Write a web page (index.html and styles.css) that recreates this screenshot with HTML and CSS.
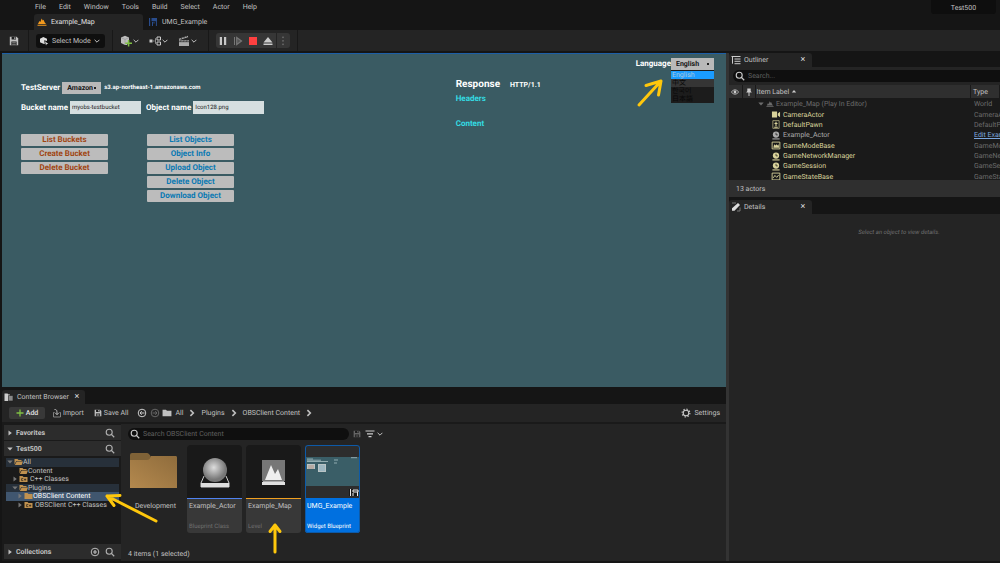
FILE: index.html
```
<!DOCTYPE html>
<html lang="en">
<head>
<meta charset="utf-8">
<title>Test500</title>
<link rel="stylesheet" href="styles.css">
</head>
<body>
<svg class="defs" aria-hidden="true">
  <symbol id="search" viewBox="0 0 10 10"><circle cx="4.2" cy="4.2" r="3" fill="none" stroke="currentColor" stroke-width="1.1"/><path d="M6.4 6.4 9.2 9.2" stroke="currentColor" stroke-width="1.3"/></symbol>
  <symbol id="down" viewBox="0 0 6 6"><path d="M.6 1.8 3 4.2 5.4 1.8" fill="none" stroke="currentColor"/></symbol>
  <symbol id="right" viewBox="0 0 6 6"><path d="M1.8.8 4 3 1.8 5.2" fill="none" stroke="currentColor" stroke-width="1.2"/></symbol>
  <symbol id="closed" viewBox="0 0 6 6"><path d="M1.5.5 4.8 3 1.5 5.5Z" fill="currentColor"/></symbol>
  <symbol id="open" viewBox="0 0 6 6"><path d="M.3 1.5H5.7L3 4.6Z" fill="currentColor"/></symbol>
  <symbol id="folder" viewBox="0 0 9 8"><path d="M.5 1H3.5L4.5 2H8.5V7H.5Z" fill="currentColor"/></symbol>
  <symbol id="folder-open" viewBox="0 0 9 8"><path d="M.5 6.5V1H3.5L4.5 2H7.5V3H2.2Z" fill="currentColor"/><path d="M2.6 3.6H9L7.6 7H.9Z" fill="currentColor"/></symbol>
  <symbol id="folder-code" viewBox="0 0 9 8"><path d="M.5 1H3.5L4.5 2H8.5V7H.5Z" fill="currentColor"/><path d="M4.3 3.6H2.6V5.6H4.3M5 4.6H7.2M6.1 3.5V5.7" fill="none" stroke="#2a2117" stroke-width=".7"/></symbol>
  <symbol id="peaks" viewBox="0 0 10 8"><path d="M1 6 2.4 3 3.4 4 4.6.5 5.8 2.5 6.6 1.8 7.6 4.3 9 6ZM.5 6.8H9.5V7.8H.5Z" fill="currentColor"/></symbol>
  <symbol id="disk" viewBox="0 0 10 10"><path d="M.8.8H7.6L9.2 2.4V9.2H.8Z" fill="currentColor"/><path d="M2.6.8H7V3.6H2.6ZM2.4 5.6H7.6V9.2H2.4Z" fill="#1d1d1d"/><path d="M5.3 1.2H6.4V3H5.3ZM3.2 6.5H6.8V7.1H3.2ZM3.2 7.8H6.8V8.4H3.2Z" fill="currentColor"/></symbol>
  <symbol id="ball" viewBox="0 0 10 10"><circle cx="5" cy="4" r="3.5" fill="currentColor"/><path d="M5 2V4.3H7" fill="none" stroke="#1a1a1a" stroke-width=".8"/><path d="M1 8.2H9V9.4H1Z" fill="currentColor"/></symbol>
</svg>

<nav class="menubar">
  <button>File</button><button>Edit</button><button>Window</button><button>Tools</button><button>Build</button><button>Select</button><button>Actor</button><button>Help</button>
  <span class="project">Test500</span>
</nav>
<div class="doctabs">
  <button class="doctab active"><svg class="i10 orange"><use href="#peaks"/></svg>Example_Map</button>
  <button class="doctab"><svg class="i10" viewBox="0 0 10 10"><path d="M1 1H2.2V9H1ZM3.5 1H9V4.2H3.5Z" fill="#294c8c"/><path d="M4.5 5V9M6 5V6.5M8.4 4V9" stroke="#294c8c"/></svg>UMG_Example</button>
</div>
<div class="toolbar">
  <button class="tool save" aria-label="Save"><svg class="i10"><use href="#disk"/></svg></button>
  <div class="group">
    <button class="mode"><svg class="i10" viewBox="0 0 10 10"><path d="M4.3 1 8 2.7V5L5.2 4.3 5.8 8 4.3 7.8 1 6.2V2.7Z" fill="#ddd"/><path d="M6 5.2 9.3 8 7.7 8.1 7 9.5Z" fill="#ddd"/></svg>Select Mode<svg class="i6"><use href="#down"/></svg></button>
  </div>
  <div class="group tools">
    <button class="tool" aria-label="Add actor"><svg class="i12" viewBox="0 0 12 12"><path d="M5 .8 9 2.6V6L7 10H5L1 8V2.6Z" fill="#bdbdbd"/><path d="M1 2.6 5 4.4 9 2.6M5 4.4V10" stroke="#888" fill="none" stroke-width=".5"/><path d="M8.6 5V11.6M5.3 8.3H12" stroke="#7fc043" stroke-width="1.5"/></svg><svg class="i6"><use href="#down"/></svg></button>
    <button class="tool" aria-label="Blueprints"><svg class="i12" viewBox="0 0 12 12"><path d="M.5 4.5H3.5V7.5H.5Z" fill="#ccc"/><path d="M4 6H5.5M6.5 3.2V8.8" fill="none" stroke="#aaa" stroke-width=".8"/><path d="M8 2H11.5V5H8ZM8 7H11.5V10H8Z" fill="none" stroke="#ccc"/></svg><svg class="i6"><use href="#down"/></svg></button>
    <button class="tool" aria-label="Cinematics"><svg class="i12" viewBox="0 0 12 12"><path d="M1 5.2H11V11H1ZM.8 3.7 9.8.7 10.2 2.2 1.3 4.9Z" fill="#aaa"/><path d="M3 3 4 4.2M5.7 2 6.7 3.3M8.2 1.2 9.2 2.5M1 6.7H11M3 5.3 2.4 6.6M6 5.3 5.4 6.6M9 5.3 8.4 6.6" stroke="#242424" stroke-width=".7"/></svg><svg class="i6"><use href="#down"/></svg></button>
  </div>
  <div class="group">
    <div class="playbar">
      <button aria-label="Pause"><svg class="i10" viewBox="0 0 10 10"><path d="M1.8 1H4V9H1.8ZM6 1H8.2V9H6Z" fill="#c8c8c8"/></svg></button>
      <button aria-label="Step"><svg class="i10" viewBox="0 0 10 10"><path d="M1.5 1V9" stroke="#777"/><path d="M3.7 1.5 8.5 5 3.7 8.5Z" fill="#555" stroke="#777" stroke-width="1.2"/></svg></button>
      <button aria-label="Stop"><svg class="i10" viewBox="0 0 10 10"><path d="M1 1H9V9H1Z" fill="#fd4040"/></svg></button>
      <button aria-label="Eject"><svg class="i10" viewBox="0 0 10 10"><path d="M5 1 9.5 6.4H.5ZM.5 7.4H9.5V9H.5Z" fill="#ccc"/></svg></button>
      <button class="more" aria-label="More"><svg class="i10" viewBox="0 0 10 10"><path d="M5 .6V9.8" stroke="#888" stroke-dasharray="1.5 2"/></svg></button>
    </div>
  </div>
  <div class="group"></div>
</div>

<main class="workspace">
  <div class="left">
    <section class="viewport">
      <div class="client">
        <div class="field"><label for="server">TestServer</label><span class="pick"><select id="server"><option>Amazon</option></select><i></i></span><span class="url">s3.ap-northeast-1.amazonaws.com</span></div>
        <div class="field names"><label for="bucket">Bucket name</label><input id="bucket" value="myobs-testbucket"><label class="second" for="object">Object name</label><input id="object" value="Icon128.png"></div>
        <div class="actions">
          <div class="stack buckets"><button>List Buckets</button><button>Create Bucket</button><button>Delete Bucket</button></div>
          <div class="stack objects"><button>List Objects</button><button>Object Info</button><button>Upload Object</button><button>Delete Object</button><button>Download Object</button></div>
        </div>
      </div>
      <div class="response">
        <h2>Response <span>HTTP/1.1</span></h2>
        <h3>Headers</h3>
        <h3>Content</h3>
      </div>
      <div class="language">
        <label for="lang">Language</label><span class="pick"><select id="lang"><option>English</option></select><i></i>
        <ul class="options"><li class="on">English</li><li class="hover">中文</li><li>한국어</li><li>日本語</li></ul></span>
        <svg class="arrow a-lang" viewBox="0 0 28 30"><path d="M3 27 25 3M10 7.5 25 3 22.5 17" /></svg>
      </div>
    </section>

    <section class="browser">
      <div class="tabs"><div class="tab cb"><svg class="i10" viewBox="0 0 10 10"><path d="M.5 1.5H3.5L4.5 2.5H6V9H.5Z" fill="#ccc"/><path d="M4.5 3.5H9V9H4.5Z" fill="#888" stroke="#1d1d1d" stroke-width=".6"/></svg>Content Browser<button aria-label="Close">×</button></div></div>
      <div class="cb-bar">
        <button class="add"><svg class="i8" viewBox="0 0 8 8"><path d="M4 .5V7.5M.5 4H7.5" stroke="#7fc043" stroke-width="1.3"/></svg>Add</button>
        <button class="import"><svg class="i10" viewBox="0 0 10 10"><path d="M2.5 4.5H1.5V9H8.5V4.5H7.5" fill="none" stroke="#999" stroke-width=".8"/><path d="M2.5 1.5C5 1.5 5 2.5 5 6.5M3.2 4.8 5 6.7 6.8 4.8" fill="none" stroke="#bbb"/></svg>Import</button>
        <button class="saveall"><svg class="i8"><use href="#disk"/></svg>Save All</button>
        <button class="back" aria-label="Back"><svg class="i10" viewBox="0 0 10 10"><circle cx="5" cy="5" r="3.8" fill="none" stroke="#ccc"/><path d="M7.5 5H3M4.7 3.2 3 5 4.7 6.8" fill="none" stroke="#ccc"/></svg></button>
        <button class="fwd" aria-label="Forward"><svg class="i10" viewBox="0 0 10 10"><circle cx="5" cy="5" r="3.8" fill="none" stroke="#666"/><path d="M2.5 5H7M5.3 3.2 7 5 5.3 6.8" fill="none" stroke="#666"/></svg></button>
        <nav class="crumbs"><svg class="i10"><use href="#folder"/></svg><a href="#">All</a><svg class="i8"><use href="#right"/></svg><a href="#">Plugins</a><svg class="i8"><use href="#right"/></svg><a href="#">OBSClient Content</a><svg class="i8"><use href="#right"/></svg></nav>
        <button class="settings"><svg class="i10" viewBox="0 0 10 10"><circle cx="5" cy="5" r="2.8" fill="none" stroke="#ccc" stroke-width="1.1"/><circle cx="5" cy="5" r="3.9" fill="none" stroke="#ccc" stroke-width="1.1" stroke-dasharray="1.3 1.76"/></svg>Settings</button>
      </div>
      <div class="cb-body">
        <aside class="sources">
          <div class="head"><svg class="i6"><use href="#closed"/></svg>Favorites<button aria-label="Search favorites"><svg class="i10"><use href="#search"/></svg></button></div>
          <div class="head"><svg class="i6"><use href="#open"/></svg>Test500<button aria-label="Search sources"><svg class="i10"><use href="#search"/></svg></button></div>
          <div class="treebox">
            <ul class="tree">
              <li class="d0 tint"><svg class="i6"><use href="#open"/></svg><svg class="f"><use href="#folder-open"/></svg>All</li>
              <li class="d1"><span class="i6"></span><svg class="f"><use href="#folder-open"/></svg>Content</li>
              <li class="d1"><svg class="i6"><use href="#closed"/></svg><svg class="f"><use href="#folder-code"/></svg><span class="sp">C++ Classes</span></li>
              <li class="d1 tint"><svg class="i6"><use href="#open"/></svg><svg class="f"><use href="#folder-open"/></svg>Plugins</li>
              <li class="d2 sel"><svg class="i6"><use href="#closed"/></svg><svg class="f"><use href="#folder"/></svg>OBSClient Content</li>
              <li class="d2"><svg class="i6"><use href="#closed"/></svg><svg class="f"><use href="#folder-code"/></svg><span class="sp">OBSClient C++ Classes</span></li>
            </ul>
            <svg class="arrow a-tree" viewBox="0 0 56 32"><path d="M53 29 4 4M17 3.5 4 4 11 13.5"/></svg>
          </div>
          <div class="head"><svg class="i6"><use href="#closed"/></svg>Collections<button aria-label="Add collection"><svg class="i10" viewBox="0 0 10 10"><circle cx="5" cy="5" r="3.8" fill="none" stroke="#bbb"/><path d="M5 3V7M3 5H7" stroke="#bbb" stroke-width="1.2"/></svg></button><button aria-label="Search collections"><svg class="i10"><use href="#search"/></svg></button></div>
        </aside>
        <div class="assets">
          <div class="filter">
            <label class="searchbox"><svg class="i10"><use href="#search"/></svg><input aria-label="Search assets" placeholder="Search OBSClient Content"></label>
            <svg class="i8 dim"><use href="#disk"/></svg>
            <button aria-label="Filters"><svg class="i10" viewBox="0 0 10 10"><path d="M.5 2H9.5M2 4.8H8M3.5 7.6H6.5" stroke="#ccc" stroke-width="1.2"/></svg><svg class="i6"><use href="#down"/></svg></button>
          </div>
          <div class="tiles">
            <div class="tile dir"><div class="thumb"><svg viewBox="0 0 55 53"><defs><linearGradient id="fg" x1="1" y1="0" x2="0" y2="1"><stop offset="0" stop-color="#8f6c3c"/><stop offset="1" stop-color="#b4894e"/></linearGradient></defs><path d="M2 10Q2 8 4 8H19Q21 8 23 12H48Q49 12 49 13V43H2Z" fill="#7f6237"/><path d="M2 15H19Q22 15 23 11H48Q49 11 49 13V43H2Z" fill="url(#fg)"/></svg></div><div class="cap"><b>Development</b></div></div>
            <div class="tile"><div class="thumb"><svg viewBox="0 0 55 53"><defs><radialGradient id="sg" cx=".45" cy=".4"><stop offset="0" stop-color="#ddd"/><stop offset="1" stop-color="#777"/></radialGradient></defs><path d="M17 31 14 38V42H42V38L39 31" fill="none" stroke="#d0d0d0"/><path d="M14 38H42V42H14Z" fill="#ddd"/><circle cx="28" cy="25" r="12" fill="url(#sg)"/></svg></div><div class="cap blue"><b>Example_Actor</b><small>Blueprint Class</small></div></div>
            <div class="tile"><div class="thumb"><svg viewBox="0 0 55 53"><path d="M16 15H39V36H16Z" fill="#777"/><path d="M16 40 17 36H38L39 40Z" fill="#aaa"/><path d="M19 35 25 20 29 29 32 24 36 35Z" fill="#eee"/><path d="M16 37H39V40H16Z" fill="#e0e0e0"/></svg></div><div class="cap gold"><b>Example_Map</b><small>Level</small></div><svg class="arrow a-map" viewBox="0 0 16 34"><path d="M8 31V4M3 10.5 8 4 13 10.5"/></svg></div>
            <div class="tile chosen"><div class="thumb"><svg viewBox="0 0 55 53"><path d="M0 0H55V53H0Z" fill="#2d2d2d"/><path d="M1 12H54V41H1Z" fill="#3a5e67"/><path d="M2 14H8M2 16.5H23M2 15.2H16M29 15H33M29 18H32M46 12.7H52" stroke="#cfe0e2" stroke-width=".6"/><path d="M2 19H10V24H2ZM13 19H21V27H13Z" fill="#b9c4c5"/><path d="M3 21H9M3 23H9" stroke="#b07258" stroke-width=".6"/><path d="M14 21H20M14 23H20M14 25H20" stroke="#5a9ab8" stroke-width=".6"/><path d="M44 44H53V51H44Z" fill="#181818"/><path d="M45.5 44V51M48 45H53V47H48ZM48 48V51M52.5 47V51" stroke="#eee" fill="none"/></svg></div><div class="cap"><b>UMG_Example</b><small>Widget Blueprint</small></div></div>
          </div>
          <p class="count">4 items (1 selected)</p>
        </div>
      </div>
    </section>
  </div>

  <div class="right">
    <section class="outliner">
      <div class="tabs"><div class="tab"><svg class="i10" viewBox="0 0 10 10"><path d="M.5 1.5H9.5M3.5 4H9.5M3.5 6.3H9.5M3.5 8.7H9.5M1.5 1.5V8.7" stroke="#ccc"/></svg>Outliner<button aria-label="Close">×</button></div></div>
      <div class="outsearch"><label class="searchbox"><svg class="i10"><use href="#search"/></svg><input aria-label="Search actors" placeholder="Search..."></label></div>
      <div class="tablebox">
        <table>
          <thead><tr><th class="ic"><svg class="i8" viewBox="0 0 8 8"><path d="M.3 4Q4-.5 7.7 4 4 8.5.3 4Z" fill="none" stroke="#bbb" stroke-width=".9"/><circle cx="4" cy="4" r="1.4" fill="#ccc"/></svg></th><th class="ic"><svg class="i8" viewBox="0 0 8 8"><path d="M2.3.5H5.7V3L6.8 4.6H1.2L2.3 3ZM3.5 4.5H4.5V8H3.5Z" fill="#ccc"/></svg></th><th class="item">Item Label <svg class="up" viewBox="0 0 6 6"><path d="M.8 4.5 3 2 5.2 4.5Z" fill="#ccc"/></svg></th><th class="type">Type</th></tr></thead>
        </table>
        <div class="rows">
        <table class="list">
          <tbody>
            <tr class="world"><td class="item"><div><svg class="i6"><use href="#open"/></svg><svg class="i8"><use href="#peaks"/></svg>Example_Map (Play In Editor)</div></td><td class="type">World</td></tr>
            <tr><td class="item"><div><svg class="g" viewBox="0 0 10 10"><path d="M.5 1.8H6.2V8.2H.5ZM7 4 9.5 2V8L7 6Z" fill="currentColor"/></svg>CameraActor</div></td><td class="type">CameraActor</td></tr>
            <tr><td class="item"><div><svg class="g" viewBox="0 0 10 10"><path d="M1.5.7H8.5V9.3H1.5Z" fill="none" stroke="currentColor" stroke-width=".7"/><path d="M5 2V7M3.3 3.8H6.7M3 8H7" stroke="currentColor" stroke-width="1.2"/></svg>DefaultPawn</div></td><td class="type">DefaultPawn</td></tr>
            <tr class="plain"><td class="item"><div><svg class="g"><use href="#ball"/></svg>Example_Actor</div></td><td class="type"><a href="#">Edit Example_Actor</a></td></tr>
            <tr><td class="item"><div><svg class="g" viewBox="0 0 10 10"><path d="M.7 1.2H9.3V8.8H.7Z" fill="none" stroke="currentColor"/><path d="M2 7.5 3 3.5 4.5 5 5.5 3.5 7 5 7.7 3.2 8.5 7.5Z" fill="currentColor"/></svg>GameModeBase</div></td><td class="type">GameModeBase</td></tr>
            <tr><td class="item"><div><svg class="g"><use href="#ball"/></svg>GameNetworkManager</div></td><td class="type">GameNetworkManager</td></tr>
            <tr><td class="item"><div><svg class="g"><use href="#ball"/></svg>GameSession</div></td><td class="type">GameSession</td></tr>
            <tr><td class="item"><div><svg class="g" viewBox="0 0 10 10"><path d="M.7 1.2H9.3V8.8H.7Z" fill="none" stroke="currentColor"/><path d="M2 6.5 3.8 3.8 5.8 6 8 3.3" fill="none" stroke="currentColor"/></svg>GameStateBase</div></td><td class="type">GameStateBase</td></tr>
          </tbody>
        </table>
        </div>
      </div>
      <p class="actors">13 actors</p>
    </section>
    <section class="details">
      <div class="tabs"><div class="tab"><svg class="i10" viewBox="0 0 10 10"><path d="M1 8.8V6.2L7 1 9 3 3.5 8.8Z" fill="#ddd"/><path d="M1 1H5M9 5.5V9H6" fill="none" stroke="#777"/></svg>Details<button aria-label="Close">×</button></div></div>
      <p class="empty">Select an object to view details.</p>
    </section>
  </div>
</main>
</body>
</html>
```
FILE: styles.css
```
* { box-sizing: border-box; margin: 0; padding: 0; }
body { height: 100vh; display: flex; flex-direction: column; overflow: hidden; background: #151515; color: #c0c0c0; font: 7px/8px Roboto, "Noto Sans CJK SC", "Noto Sans CJK KR", sans-serif; text-rendering: geometricPrecision; }
button, input, select { font: inherit; color: inherit; background: none; border: 0; text-rendering: inherit; }
button { display: flex; align-items: center; white-space: nowrap; }
svg { display: block; flex: none; }
ul { list-style: none; }
a { color: inherit; text-decoration: none; }
.defs { position: absolute; width: 0; height: 0; }
.i6 { width: 6px; height: 6px; }
.i8 { width: 8px; height: 8px; }
.i10 { width: 10px; height: 10px; }
.i12 { width: 12px; height: 12px; }
.orange { color: #f39a1e; }
.dim { color: #666; }

.menubar { display: flex; height: 14px; flex: none; padding-left: 35px; gap: 13px; align-items: center; }
.menubar button { height: 12px; }
.project { margin-left: auto; align-self: stretch; width: 65px; margin-right: 4px; padding-top: 1px; line-height: 14px; text-align: center; background: #0e0e0e; border-radius: 0 0 3px 3px; }
.doctabs { display: flex; height: 16px; flex: none; padding-left: 34px; }
.doctab { width: 109px; padding-left: 3px; gap: 4px; border-radius: 3px 3px 0 0; }
.doctab + .doctab { padding-left: 5px; }
.doctab.active { background: #242424; color: #e0e0e0; }
.toolbar { display: flex; height: 21px; flex: none; align-items: stretch; background: #242424; }
.save { padding: 0 9px; color: #c0c0c0; }
.group { display: flex; align-items: center; border-left: 1px solid #181818; padding: 0 7px; }
.mode { height: 14px; padding: 0 5px 0 3px; gap: 3px; border-radius: 3px; background: #0f0f0f; }
.tool { gap: 1px; }
.tools { gap: 10px; padding-right: 11px; }
.playbar { display: flex; height: 15px; border-radius: 3px; background: #363636; }
.playbar button { width: 15px; justify-content: center; }
.playbar .more { width: 14px; border-left: 1px solid #242424; }

.workspace { flex: 1; min-height: 0; display: grid; grid-template-columns: minmax(0, 1fr) 271px; gap: 3px; padding: 2px 0 2px 2px; background: linear-gradient(#151515, #151515) top / 100% 2px no-repeat, linear-gradient(#151515, #151515) bottom / 100% 2px no-repeat, linear-gradient(#151515, #151515) left / 2px 100% no-repeat, #333; }
.left, .right { display: flex; flex-direction: column; min-width: 0; min-height: 0; }

.viewport { flex: 1; min-height: 0; display: flex; align-items: flex-start; position: relative; background: #3a5b63; border-top: 1px solid #1d5fa8; padding: 4px 12px 0 19px; color: #fff; font-weight: bold; font-size: 8px; }
.client { flex: 1; padding-top: 23px; }
.field { display: flex; align-items: center; height: 13px; gap: 2px; white-space: nowrap; }
.names { margin-top: 7px; }
.field label { line-height: 12px; }
.second { margin-left: 3px; }
.pick { position: relative; display: inline-flex; background: #b9b9b9; color: #151515; font-size: 7px; }
.pick select { appearance: none; height: 12px; padding: 0 8px 0 5px; font-weight: bold; }
.pick i { position: absolute; right: 5px; top: 5px; width: 2px; height: 2px; background: #222; }
.url { font-size: 6px; margin-left: 1px; }
.names input { width: 71px; height: 13px; padding: 0 2px; background: #d6dfe0; color: #222; font-size: 6px; font-weight: normal; }
.actions { display: flex; gap: 39px; margin-top: 20px; }
.stack { display: flex; flex-direction: column; gap: 2px; width: 87px; }
.stack button { justify-content: center; height: 12px; border-radius: 1px; background: #bcbcbc; }
.buckets { color: #a04512; }
.objects { color: #0a79b3; }
.response { width: 180px; padding-top: 19px; }
.response h2 { display: flex; align-items: center; gap: 10px; font-size: 10px; line-height: 13px; }
.response h2 span { font-size: 7px; padding-top: 2px; }
.response h3 { font-size: 8px; line-height: 10px; margin-top: 2px; color: #34dde4; }
.response h3 + h3 { margin-top: 15px; }
.language { position: relative; display: flex; align-items: center; }
.language .pick select { width: 43px; }
.options { position: absolute; top: 12px; left: 0; width: 100%; padding-top: 1px; background: #1c1c1c; color: #080808; font-size: 7px; font-weight: 400; line-height: 8px; }
.options li { height: 8px; overflow: hidden; padding-left: 1px; }
.options .on { background: #1a9cff; color: #a9c6dc; }
.options .hover { background: #353535; }
.arrow { position: absolute; fill: none; stroke: #fec70c; stroke-width: 3; stroke-linecap: round; stroke-linejoin: round; pointer-events: none; z-index: 2; }
.a-lang { width: 28px; height: 30px; left: 0; top: 20px; }

.browser { height: 174px; flex: none; display: flex; flex-direction: column; background: #242424; }
.tabs { height: 17px; flex: none; display: flex; align-items: flex-end; background: #151515; }
.tab { display: flex; align-items: center; gap: 3px; width: 83px; height: 14px; padding: 0 4px 0 2px; border-radius: 3px 3px 0 0; background: #242424; }
.tab button { width: 10px; height: 10px; justify-content: center; margin-left: auto; font-size: 9px; color: #ddd; }
.tab.cb { padding-right: 3px; }
.cb-bar { display: flex; align-items: center; height: 18px; flex: none; padding: 0 6px 0 7px; }
.cb-bar button { gap: 2px; }
.cb-bar .add { width: 36px; height: 12px; justify-content: center; border-radius: 2px; background: #383838; color: #e0e0e0; font-weight: 500; }
.cb-bar .import { margin-left: 7px; gap: 1px; }
.saveall { margin-left: 10px; }
.back { margin-left: 8px; }
.fwd { margin-left: 3px; }
.crumbs { display: flex; align-items: center; gap: 5px; margin-left: 2px; }
.crumbs a:first-of-type { margin-left: -1px; }
.cb-bar .settings { margin-left: auto; gap: 3px; }
.cb-body { flex: 1; min-height: 0; display: flex; border-top: 2px solid #1a1a1a; }
.sources { width: 119px; display: flex; flex-direction: column; gap: 1px; padding: 1px 0 2px 2px; background: #1a1a1a; }
.head { display: flex; align-items: center; gap: 2px; height: 15px; flex: none; padding: 0 6px 0 3px; background: #2c2c2c; font-weight: bold; }
.head > svg { margin-right: 1px; }
.head button { color: #b0b0b0; margin-left: 3px; }
.head button:first-of-type { margin-left: auto; }
.treebox { position: relative; flex: 1; padding: 1px 2px 0; }
.tree { display: grid; grid-auto-rows: 1fr; height: 51px; }
.tree li { display: flex; align-items: center; min-height: 0; white-space: nowrap; }
.tree .f { width: 9px; height: 8px; color: #c0914f; }
.tree .i6 { margin-right: 1px; color: #777; }
.tree .sp { padding-left: 2px; }
.d0 { padding-left: 1px; }
.d1 { padding-left: 6px; }
.d2 { padding-left: 11px; }
.tint { background: #27303a; }
.sel { background: #40566f; color: #fff; }
.a-tree { width: 56px; height: 32px; left: 99px; top: 35px; }
.assets { flex: 1; min-width: 0; display: flex; flex-direction: column; margin-left: 3px; padding: 4px 4px 0; }
.filter { display: flex; align-items: center; gap: 4px; }
.filter button { gap: 2px; }
.searchbox { display: flex; align-items: center; gap: 3px; height: 12px; padding-left: 2px; border-radius: 6px; background: #0f0f0f; color: #ccc; }
.searchbox input { width: 100%; min-width: 0; height: 10px; outline: none; }
.searchbox input::placeholder { color: #606060; }
.filter .searchbox { width: 221px; }
.tiles { display: flex; gap: 4px; margin-top: 5px; }
.tile { position: relative; width: 55px; height: 88px; display: flex; flex-direction: column; border-radius: 3px; background: #383838; }
.thumb { height: 53px; flex: none; overflow: hidden; background: #191919; border-radius: 3px 3px 0 0; }
.cap { flex: 1; display: flex; flex-direction: column; justify-content: space-between; padding: 3px 2px 2px; border-top: 1px solid transparent; white-space: nowrap; }
.cap b { font-weight: normal; }
.cap small { font-size: 6px; color: #707070; }
.cap.blue { border-top-color: #4f82f0; }
.cap.gold { border-top-color: #f0a020; }
.dir, .dir .thumb { background: none; }
.dir .cap { text-align: center; }
.chosen { background: #0070e0; color: #fff; outline: 1px solid #0d5aa8; outline-offset: -1px; }
.chosen small { color: #fff; }
.a-map { width: 16px; height: 34px; left: 21px; top: 76px; }
.count { margin-top: 17px; }

.outliner { display: flex; flex-direction: column; flex: none; background: #242424; }
.outliner .tabs { height: 14px; }
.outsearch { padding: 3px 0 3px 4px; }
.outsearch .searchbox { border-radius: 6px 0 0 6px; }
table { width: 100%; table-layout: fixed; border-collapse: collapse; }
th { height: 13px; background: #2f2f2f; font-weight: normal; text-align: left; border-right: 1px solid #1a1a1a; white-space: nowrap; }
th.ic { width: 13px; padding-left: 2px; }
th.item { padding-left: 1px; }
.up { display: inline-block; width: 6px; height: 6px; }
.type { width: 29px; overflow: hidden; white-space: nowrap; padding-left: 2px; }
td.type { width: 26px; padding: 0; color: #6c6c6c; }
.type a { color: #7ba7df; text-decoration: underline; }
.rows { height: 82px; padding-top: 1px; overflow: hidden; background: #1a1a1a; }
.list { height: 83px; color: #d9d29a; }
.list .item div { display: flex; align-items: center; gap: 2px; padding-left: 42px; height: 10px; }
.list .world .item div { padding-left: 29px; }
.list .world { color: #6c6c6c; }
.list .plain { color: #aaa; }
.g { width: 10px; height: 9px; }
.actors { height: 17px; padding: 5px 7px 0; background: #2f2f2f; }
.details { flex: 1; background: #242424; }
.details .tabs { height: 17px; }
.empty { padding-top: 15px; text-align: center; padding-left: 69px; font-size: 6px; font-style: italic; color: #707070; }
```
